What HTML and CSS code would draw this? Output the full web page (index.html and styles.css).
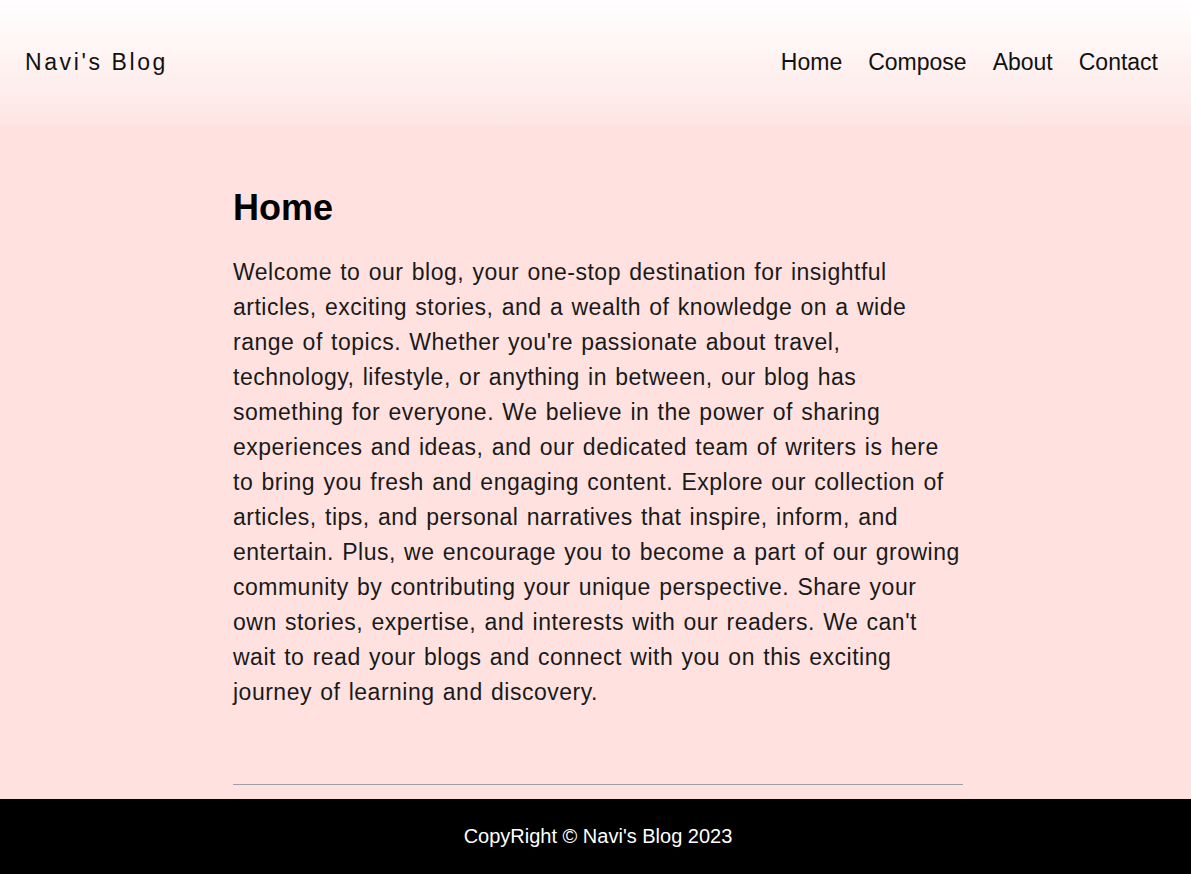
FILE: index.html
```html
<!DOCTYPE html>
<html lang="en">
<head>
<meta charset="utf-8">
<title>Navi's Blog</title>
<link rel="stylesheet" href="styles.css">
</head>
<body>
<header class="site-header">
  <a class="brand" href="#">Navi's Blog</a>
  <nav class="nav">
    <a href="#">Home</a>
    <a href="#">Compose</a>
    <a href="#">About</a>
    <a href="#">Contact</a>
  </nav>
</header>
<main class="container">
  <h1 class="title">Home</h1>
  <p class="intro">Welcome to our blog, your one-stop destination for insightful articles, exciting stories, and a wealth of knowledge on a wide range of topics. Whether you're passionate about travel, technology, lifestyle, or anything in between, our blog has something for everyone. We believe in the power of sharing experiences and ideas, and our dedicated team of writers is here to bring you fresh and engaging content. Explore our collection of articles, tips, and personal narratives that inspire, inform, and entertain. Plus, we encourage you to become a part of our growing community by contributing your unique perspective. Share your own stories, expertise, and interests with our readers. We can't wait to read your blogs and connect with you on this exciting journey of learning and discovery.</p>
  <hr class="rule">
</main>
<footer class="site-footer">
  <p>CopyRight © Navi's Blog 2023</p>
</footer>
</body>
</html>
```
FILE: styles.css
```css
html, body {
  margin: 0;
  padding: 0;
}
body {
  background: #ffe2df;
  font-family: "Liberation Sans", Arial, sans-serif;
  color: #1a1a1a;
}
.site-header {
  height: 125px;
  background: linear-gradient(to bottom, #ffffff 0%, #fde6e4 100%);
  display: flex;
  align-items: center;
  justify-content: space-between;
  padding: 0 33px 0 25px;
}
.brand {
  font-size: 23px;
  letter-spacing: 2.6px;
  color: #111;
  text-decoration: none;
}
.nav {
  display: flex;
  gap: 26px;
}
.nav a {
  font-size: 23px;
  color: #111;
  text-decoration: none;
}
.container {
  width: 730px;
  margin: 0 auto;
  padding: 62px 0 0 5px;
}
.title {
  margin: 0;
  font-size: 36px;
  font-weight: bold;
  color: #000;
}
.intro {
  margin: 26px 0 0;
  font-size: 23px;
  line-height: 35px;
  letter-spacing: 0.5px;
  word-spacing: 1.4px;
  color: #1a1a1a;
}
.rule {
  margin: 74px 0 14px;
  border: 0;
  border-top: 1px solid #9aa0a3;
}
.site-footer {
  background: #000;
  height: 75px;
  display: flex;
  align-items: center;
  justify-content: center;
  padding-left: 5px;
}
.site-footer p {
  margin: 0;
  color: #fff;
  font-size: 20px;
}
```
